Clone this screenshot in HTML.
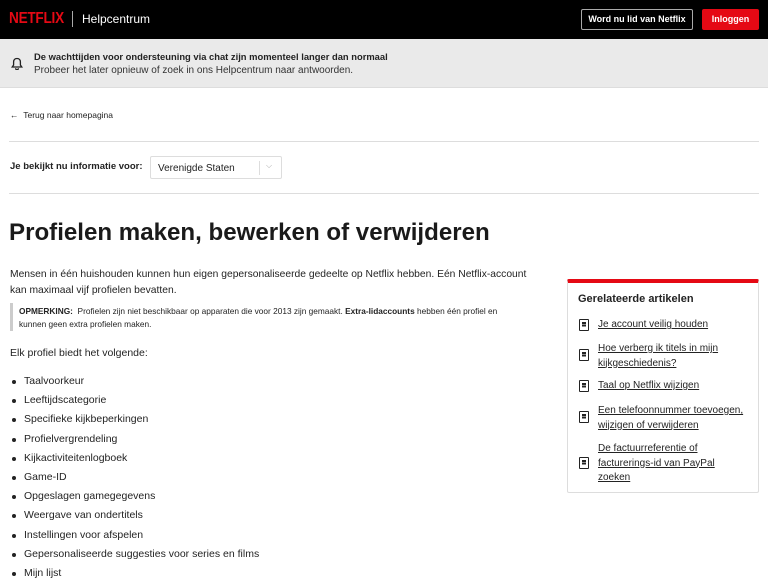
<!DOCTYPE html>
<html><head><meta charset="utf-8"><style>
*{margin:0;padding:0;box-sizing:border-box}
body{width:768px;height:576px;overflow:hidden;font-family:"Liberation Sans",sans-serif;color:#232323;background:#fff;position:relative}
.hdr{position:absolute;left:0;top:0;width:768px;height:39px;background:#000}
.logo{position:absolute;left:9px;top:10px;color:#e50914;font-weight:bold;font-size:16px;letter-spacing:-0.3px;transform:scaleX(0.85);transform-origin:left}
.sep{position:absolute;left:72px;top:11px;width:1px;height:16px;background:#aaa}
.hc{position:absolute;left:82px;top:12px;color:#fff;font-size:12px}
.b1{position:absolute;left:581px;top:9px;width:112px;height:21px;border:1px solid #aaa;border-radius:2px;color:#fff;font-size:9px;font-weight:bold;text-align:center;line-height:19px}
.b2{position:absolute;left:702px;top:9px;width:57px;height:21px;background:#e50914;border-radius:2px;color:#fff;font-size:9px;font-weight:bold;text-align:center;line-height:21px}
.ban{position:absolute;left:0;top:39px;width:768px;height:49px;background:#eaeaea;border-bottom:1px solid #ddd}
.ban b{position:absolute;left:34px;top:12px;font-size:9.4px}
.ban span{position:absolute;left:34px;top:26px;font-size:10px;color:#333}
.a{position:absolute;font-size:11px}
.hr{position:absolute;left:9px;width:750px;height:1px;background:#ddd}
ul{position:absolute;left:10px;top:375px;list-style:none;font-size:10.5px}
ul li{height:19.2px;padding-left:14px;position:relative}
ul li:before{content:"";position:absolute;left:2px;top:5px;width:4px;height:4px;border-radius:50%;background:#232323}
.box{position:absolute;left:567px;top:279px;width:192px;height:214px;border:1px solid #ddd;border-top:4px solid #e50914;border-radius:2px}
.box h3{position:absolute;left:10px;top:10px;font-size:11px}
.it{position:absolute;left:30px;font-size:10px;line-height:14.5px;text-decoration:underline;color:#232323}
.ic{position:absolute;left:11px;width:10px;height:12px;border:1.5px solid #232323;border-radius:1px}
.ic:after{content:"";position:absolute;left:1.5px;top:2px;width:4px;height:1.5px;background:#232323;box-shadow:0 2.5px 0 #232323}
</style></head><body>
<div class="hdr"><div class="logo">NETFLIX</div><div class="sep"></div><div class="hc">Helpcentrum</div>
<div class="b1">Word nu lid van Netflix</div><div class="b2">Inloggen</div></div>
<div class="ban"><svg style="position:absolute;left:11px;top:18px" width="12" height="13" viewBox="0 0 12 13"><path d="M6 1.5C3.8 1.5 2.6 3 2.6 5v3L1.2 10h9.6L9.4 8V5C9.4 3 8.2 1.5 6 1.5zM4.6 11.2a1.4 1.4 0 0 0 2.8 0" fill="none" stroke="#222" stroke-width="1.3"/></svg>
<b>De wachttijden voor ondersteuning via chat zijn momenteel langer dan normaal</b><span>Probeer het later opnieuw of zoek in ons Helpcentrum naar antwoorden.</span></div>
<div class="a" style="left:10px;top:110px;font-size:8.5px">←&nbsp;&nbsp;Terug naar homepagina</div>
<div class="hr" style="top:141px"></div>
<div class="a" style="left:10px;top:161px;font-size:9.5px;font-weight:bold">Je bekijkt nu informatie voor:</div>
<div style="position:absolute;left:150px;top:156px;width:132px;height:23px;border:1px solid #ddd;border-radius:2px;font-size:10px;padding:6px 7px">Verenigde Staten<span style="position:absolute;left:108px;top:4px;width:1px;height:14px;background:#ddd"></span><span style="position:absolute;left:115px;top:4px;color:#aaa;font-size:8px">⌵</span></div>
<div class="hr" style="top:193px"></div>
<div class="a" style="left:9px;top:219px;font-size:24.1px;font-weight:bold;color:#1a1a1a">Profielen maken, bewerken of verwijderen</div>
<div class="a" style="left:10px;top:267px;font-size:10.3px;line-height:15.5px;white-space:nowrap">Mensen in één huishouden kunnen hun eigen gepersonaliseerde gedeelte op Netflix hebben. Eén Netflix-account<br>kan maximaal vijf profielen bevatten.</div>
<div style="position:absolute;left:10px;top:303px;width:3px;height:28px;background:#ccc"></div>
<div class="a" style="left:19px;top:305px;font-size:8.3px;line-height:13px;width:500px"><b>OPMERKING:</b>&nbsp; Profielen zijn niet beschikbaar op apparaten die voor 2013 zijn gemaakt. <b>Extra-lidaccounts</b> hebben één profiel en kunnen geen extra profielen maken.</div>
<div class="a" style="left:10px;top:347px;font-size:10.5px">Elk profiel biedt het volgende:</div>
<ul><li>Taalvoorkeur</li><li>Leeftijdscategorie</li><li>Specifieke kijkbeperkingen</li><li>Profielvergrendeling</li><li>Kijkactiviteitenlogboek</li><li>Game-ID</li><li>Opgeslagen gamegegevens</li><li>Weergave van ondertitels</li><li>Instellingen voor afspelen</li><li>Gepersonaliseerde suggesties voor series en films</li><li>Mijn lijst</li></ul>
<div class="box"><h3>Gerelateerde artikelen</h3>
<span class="ic" style="top:36px"></span><div class="it" style="top:35px">Je account veilig houden</div>
<span class="ic" style="top:66px"></span><div class="it" style="top:59px">Hoe verberg ik titels in mijn<br>kijkgeschiedenis?</div>
<span class="ic" style="top:97px"></span><div class="it" style="top:96px">Taal op Netflix wijzigen</div>
<span class="ic" style="top:128px"></span><div class="it" style="top:121px">Een telefoonnummer toevoegen,<br>wijzigen of verwijderen</div>
<span class="ic" style="top:174px"></span><div class="it" style="top:159px">De factuurreferentie of<br>facturerings-id van PayPal<br>zoeken</div>
</div>
</body></html>
